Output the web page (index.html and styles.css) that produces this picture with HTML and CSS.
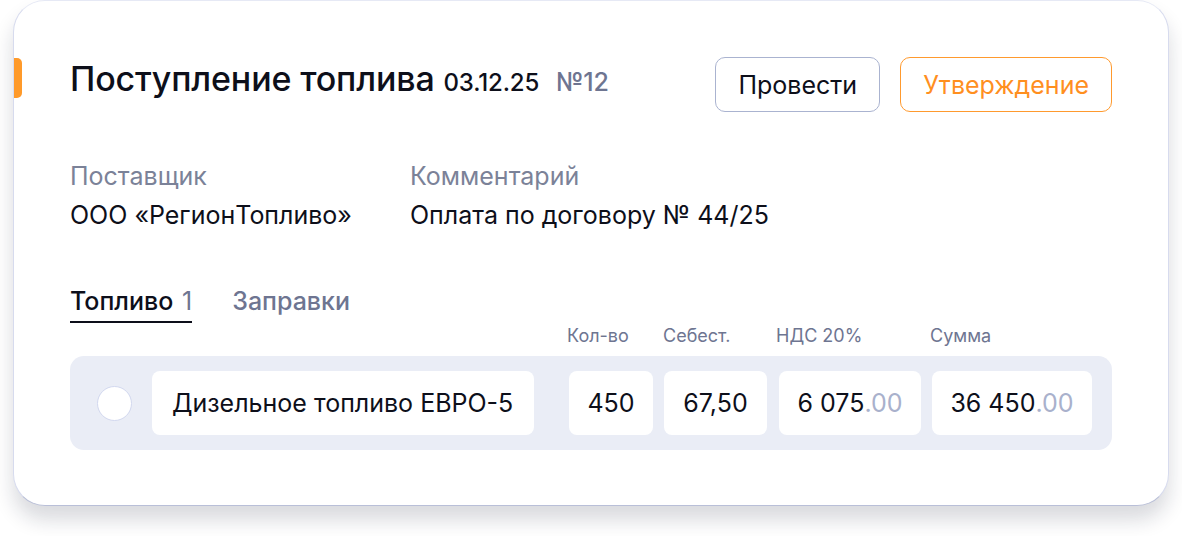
FILE: index.html
```html
<!DOCTYPE html>
<html lang="ru">
<head>
  <meta charset="UTF-8" />
  <title>Поступление топлива</title>
  <link rel="stylesheet" href="styles.css">
</head>
<body>

  <div class="card">
    <span class="marker"></span>

    <!-- Шапка документа -->
    <div class="header">
      <h1 class="title">Поступление топлива <span class="date">03.12.25</span> <span class="num">№12</span></h1>
      <div class="actions">
        <button class="btn">Провести</button>
        <button class="btn btn-orange">Утверждение</button>
      </div>
    </div>

    <!-- Реквизиты -->
    <div class="fields">
      <div class="field">
        <div class="label">Поставщик</div>
        <div class="value">ООО «РегионТопливо»</div>
      </div>
      <div class="field">
        <div class="label">Комментарий</div>
        <div class="value">Оплата по договору № 44/25</div>
      </div>
    </div>

    <!-- Вкладки -->
    <div class="tabs">
      <div class="tab active">Топливо <span class="count">1</span></div>
      <div class="tab">Заправки</div>
    </div>

    <!-- Таблица -->
    <div class="cols">
      <div class="col c-qty">Кол-во</div>
      <div class="col c-cost">Себест.</div>
      <div class="col c-vat">НДС 20%</div>
      <div class="col c-sum">Сумма</div>
    </div>
    <div class="row">
      <span class="check"></span>
      <div class="cell c-name">Дизельное топливо ЕВРО-5</div>
      <div class="cell c-qty">450</div>
      <div class="cell c-cost">67,50</div>
      <div class="cell c-vat">6 075<span class="dec">.00</span></div>
      <div class="cell c-sum">36 450<span class="dec">.00</span></div>
    </div>
  </div>

</body>
</html>
```

FILE: styles.css
```css
html, body {
  background-color: #ffffff;
}

body {
  margin: 0;
  padding-bottom: 30px;
  font-family: 'Inter', 'Noto Sans', sans-serif;
  color: #0d0f1a;
}

.card {
  position: relative;
  box-sizing: border-box;
  width: 1156px;
  height: 506px;
  margin: 0 0 0 13px;
  padding: 56px 56px 0 56px;
  background-color: #fff;
  border: 1px solid #d7dbee;
  border-top-color: #e6e9f5;
  border-bottom-color: #b9bfd8;
  border-radius: 32px;
  box-shadow: 0 14px 20px rgba(20, 25, 50, 0.16);
}

.marker {
  position: absolute;
  left: 0;
  top: 57px;
  width: 8px;
  height: 40px;
  background-color: #ff9a2a;
  border-radius: 0 5px 5px 0;
}

.header {
  display: flex;
  justify-content: space-between;
  align-items: flex-start;
}

.title {
  margin: 1px 0 0 0;
  font-size: 34px;
  font-weight: 500;
  letter-spacing: -0.15px;
  white-space: nowrap;
}

.date {
  font-size: 24px;
  font-weight: 500;
  margin-left: 0;
}

.num {
  font-size: 25px;
  font-weight: 500;
  color: #6e7591;
  margin-left: 8px;
}

.actions {
  display: flex;
  gap: 20px;
}

.btn {
  height: 55px;
  padding: 0 22px;
  background: #fff;
  border: 1px solid #aab3d0;
  border-radius: 10px;
  font-family: inherit;
  font-size: 25px;
  color: #0d0f1a;
  cursor: pointer;
}

.btn-orange {
  border-color: #ff9a2e;
  color: #ff8f1f;
}

.fields {
  display: flex;
  margin-top: 49px;
}

.field {
  width: 340px;
  white-space: nowrap;
}

.label {
  font-size: 25px;
  color: #7b8298;
}

.value {
  margin-top: 9px;
  font-size: 25px;
}

.tabs {
  display: flex;
  gap: 40px;
  margin-top: 56px;
}

.tab {
  font-size: 25px;
  font-weight: 500;
  color: #6e7591;
  padding-bottom: 5px;
}

.tab.active {
  color: #0d0f1a;
  border-bottom: 2px solid #0d0f1a;
}

.count {
  font-weight: 400;
  color: #6e7591;
  margin-left: 2px;
}

.cols {
  display: flex;
  padding-left: 497px;
  margin-top: 2px;
  font-size: 18px;
  color: #6e7591;
}

.col.c-qty { width: 96px; }
.col.c-cost { width: 113px; }
.col.c-vat { width: 154px; }

.row {
  display: flex;
  align-items: center;
  height: 94px;
  margin-top: 10px;
  padding: 0 20px 0 27px;
  background-color: #eaedf6;
  border-radius: 14px;
}

.check {
  width: 33px;
  height: 33px;
  border-radius: 50%;
  background: #fff;
  border: 1.5px solid #d2d8ef;
  margin-right: 20px;
}

.cell {
  height: 64px;
  display: flex;
  align-items: center;
  justify-content: center;
  background: #fff;
  border-radius: 8px;
  font-size: 25px;
}

.cell.c-name {
  width: 382px;
  justify-content: flex-start;
  padding-left: 20px;
  box-sizing: border-box;
  margin-right: 35px;
}

.cell.c-qty { width: 84px; margin-right: 11px; }
.cell.c-cost { width: 103px; margin-right: 12px; }
.cell.c-vat { width: 142px; margin-right: 11px; }
.cell.c-sum { width: 160px; }

.dec {
  color: #a9b1cc;
}
```
